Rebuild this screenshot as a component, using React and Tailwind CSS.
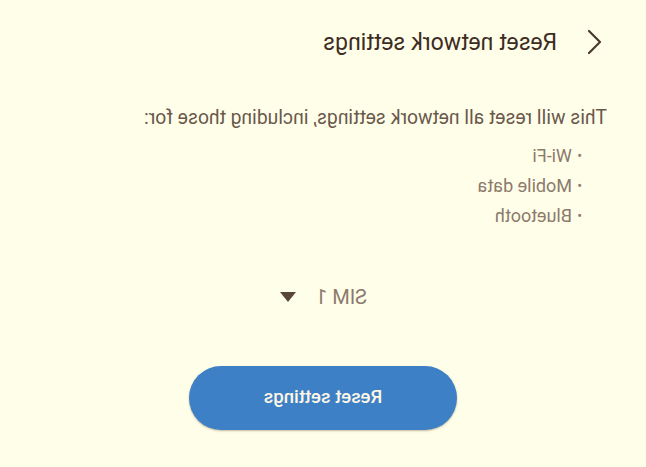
export default function App() {
  return (
    <div className="w-[646px] h-[467px] overflow-hidden bg-[#fffee9]">
      <div className="-scale-x-100 w-[646px] h-[467px] flex flex-col font-['Roboto',Arial,sans-serif]">
        <div className="flex items-center h-[84px] pl-[42px]">
          <svg width="18" height="28" viewBox="0 0 18 28" className="text-[#4a3a30]">
            <path d="M15 3 L4 14 L15 25" fill="none" stroke="currentColor" strokeWidth="2.2" strokeLinecap="round" strokeLinejoin="round" />
          </svg>
          <span className="ml-[29px] text-[23px] text-[#3d2c22] leading-none">Reset network settings</span>
        </div>
        <div className="pl-[39px] pt-[24px] text-[19.3px] text-[#6a584c] leading-none">
          This will reset all network settings, including those for:
        </div>
        <ul className="pl-[64px] pt-[14px] text-[18px] text-[#8c7a6c] leading-[30px]">
          <li className="flex items-center"><span className="w-[10px] text-[14px]">•</span>Wi-Fi</li>
          <li className="flex items-center"><span className="w-[10px] text-[14px]">•</span>Mobile data</li>
          <li className="flex items-center"><span className="w-[10px] text-[14px]">•</span>Bluetooth</li>
        </ul>
        <div className="flex items-center pl-[279px] mt-[48px] h-[36px]">
          <span className="text-[20px] text-[#8c7a6c] leading-none">SIM 1</span>
          <svg width="18" height="12" viewBox="0 0 18 12" className="ml-[19px]">
            <path d="M1 1 L17 1 L9 11 Z" fill="#5a4638" />
          </svg>
        </div>
        <div className="flex justify-center mt-[51px]">
          <button className="w-[268px] h-[64px] rounded-full bg-[#3d80c6] text-[#fff7e6] font-medium text-[18.5px] shadow-[0_1px_2px_rgba(80,60,30,0.35)]">
            Reset settings
          </button>
        </div>
      </div>
    </div>
  );
}
